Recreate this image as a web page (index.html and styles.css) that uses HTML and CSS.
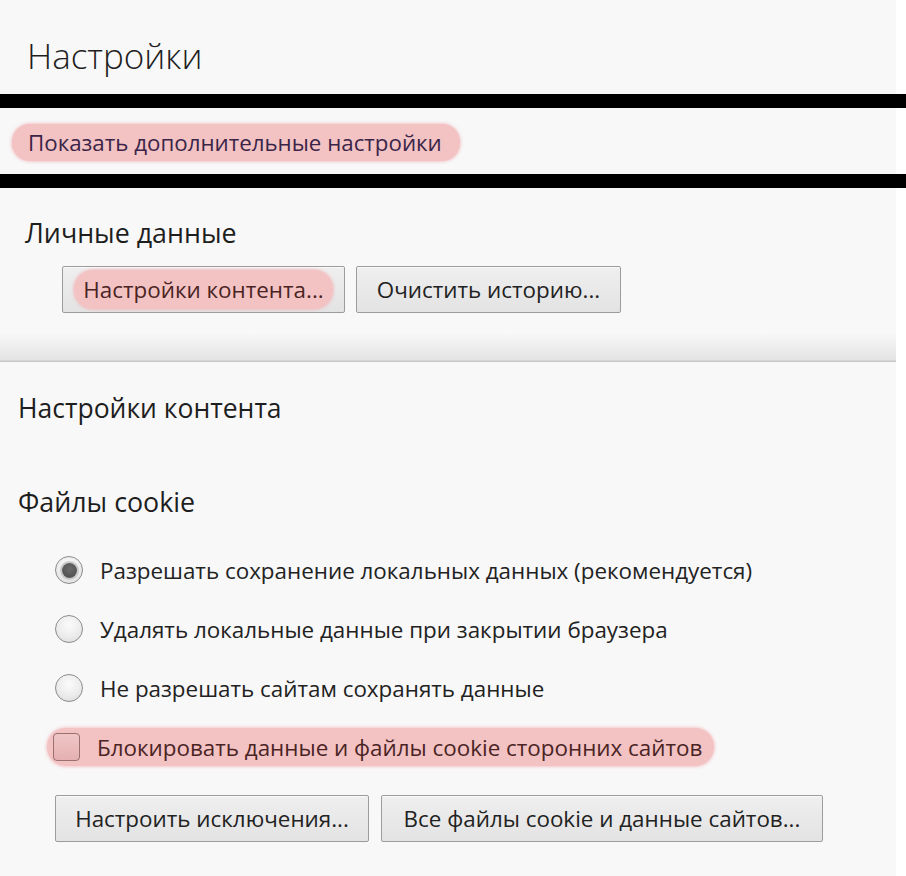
FILE: index.html
```html
<!DOCTYPE html>
<html lang="ru">
<head>
<meta charset="utf-8">
<title>Настройки</title>
<link rel="stylesheet" href="styles.css">
</head>
<body>
<div class="page">
  <section class="top">
    <h1 class="title">Настройки</h1>
  </section>
  <div class="bar"></div>
  <section class="adv">
    <a class="adv-link hl">Показать дополнительные настройки</a>
  </section>
  <div class="bar"></div>
  <section class="personal">
    <h2 class="h-personal">Личные данные</h2>
    <div class="btn-row btn-row-personal">
      <button class="btn btn-content"><span class="hl hl-btn">Настройки контента...</span></button>
      <button class="btn btn-clear">Очистить историю...</button>
    </div>
  </section>
  <section class="content">
    <h2 class="h-content">Настройки контента</h2>
    <h3 class="h-cookie">Файлы cookie</h3>
    <div class="options">
      <div class="opt"><span class="radio checked"></span><span class="opt-text">Разрешать сохранение локальных данных (рекомендуется)</span></div>
      <div class="opt"><span class="radio"></span><span class="opt-text">Удалять локальные данные при закрытии браузера</span></div>
      <div class="opt"><span class="radio"></span><span class="opt-text">Не разрешать сайтам сохранять данные</span></div>
      <div class="opt opt-check hl"><span class="check"></span><span class="opt-text">Блокировать данные и файлы cookie сторонних сайтов</span></div>
    </div>
    <div class="btn-row btn-row-cookie">
      <button class="btn btn-exc">Настроить исключения...</button>
      <button class="btn btn-all">Все файлы cookie и данные сайтов...</button>
    </div>
  </section>
</div>
</body>
</html>
```

FILE: styles.css
```css
* { box-sizing: border-box; }
html, body { margin: 0; padding: 0; }
body {
  background: #ffffff;
  font-family: "Open Sans", "Noto Sans", "DejaVu Sans", sans-serif;
  color: #222;
  width: 906px;
  height: 876px;
  overflow: hidden;
}
.page {
  width: 896px;
  display: flex;
  flex-direction: column;
}
.top {
  height: 94px;
  background: #f8f8f8;
  padding: 36px 0 0 27px;
}
.title {
  margin: 0;
  font-size: 35px;
  line-height: 40px;
  font-weight: 300;
  color: #1e1e1e;
}
.bar {
  height: 14px;
  background: #000;
  width: 906px;
}
.adv {
  height: 66px;
  background: #f8f8f8;
  padding: 16px 0 0 12px;
}
.hl {
  background: #f3c2c3;
  box-shadow: 0 0 3px 1px rgba(243, 180, 182, 0.7);
}
.adv-link {
  display: inline-block;
  height: 37px;
  line-height: 37px;
  padding: 0 18px 0 16px;
  border-radius: 18px;
  font-size: 22.3px;
  color: #3a2548;
}
.personal {
  height: 174px;
  background: linear-gradient(to bottom, #f8f8f8 0, #f8f8f8 145px, #e4e4e4 172px, #c8c8c8 173px, #c8c8c8 174px);
  padding: 28px 0 0 25px;
}
.h-personal {
  margin: 0;
  font-size: 26.8px;
  line-height: 34px;
  font-weight: 400;
  color: #1e1e1e;
}
.btn-row {
  display: flex;
  gap: 11px;
}
.btn-row-personal {
  margin: 16px 0 0 37px;
}
.btn {
  height: 47px;
  border: 1px solid #9c9c9c;
  border-radius: 2px;
  background: linear-gradient(to bottom, #efefef, #e3e3e3);
  box-shadow: inset 0 1px 0 #fafafa;
  font-family: "Open Sans", "Noto Sans", "DejaVu Sans", sans-serif;
  font-size: 22.4px;
  color: #222;
  padding: 0;
  display: flex;
  align-items: center;
  justify-content: center;
}
.btn-content { width: 283px; padding: 0 11px; }
.hl-btn {
  display: block;
  width: 100%;
  height: 39px;
  line-height: 39px;
  border-radius: 19px;
  color: #4a2424;
  text-align: center;
}
.btn-clear { width: 265px; }
.content {
  height: 514px;
  background: #f8f8f8;
  padding: 28px 0 0 18px;
}
.h-content {
  margin: 0;
  font-size: 26.5px;
  line-height: 36px;
  font-weight: 400;
  color: #1e1e1e;
}
.h-cookie {
  margin: 58px 0 0;
  font-size: 26.8px;
  line-height: 36px;
  font-weight: 400;
  color: #1e1e1e;
}
.options {
  margin: 36px 0 0 37px;
  display: flex;
  flex-direction: column;
  align-items: flex-start;
  gap: 31px;
}
.opt {
  display: flex;
  align-items: center;
  gap: 17px;
  height: 28px;
}
.opt-text {
  font-size: 22.4px;
  color: #222;
  white-space: nowrap;
}
.radio {
  width: 28px;
  height: 28px;
  border-radius: 50%;
  border: 1px solid #8c8c8c;
  background: radial-gradient(circle at 50% 35%, #fbfbfb 0, #ececec 55%, #d8d8d8 100%);
  display: flex;
  align-items: center;
  justify-content: center;
  flex: none;
}
.radio.checked::after {
  content: "";
  width: 15px;
  height: 15px;
  border-radius: 50%;
  background: radial-gradient(circle at 50% 40%, #6a6a6a, #4a4a4a);
  box-shadow: 0 0 0 2px #c9c9c9;
}
.opt-check {
  margin: -5px 0 0 -8px;
  height: 38px;
  padding: 0 12px 0 6px;
  border-radius: 19px;
  gap: 17px;
}
.check {
  width: 27px;
  height: 28px;
  border: 1px solid #9a6f70;
  border-radius: 4px;
  background: linear-gradient(to bottom, #f0c6c6, #e5b0b1);
  flex: none;
}
.opt-check .opt-text { color: #4a2424; }
.btn-row-cookie {
  margin: 29px 0 0 37px;
  gap: 12px;
}
.btn-exc { width: 314px; height: 47px; }
.btn-all { width: 442px; height: 47px; }
```
